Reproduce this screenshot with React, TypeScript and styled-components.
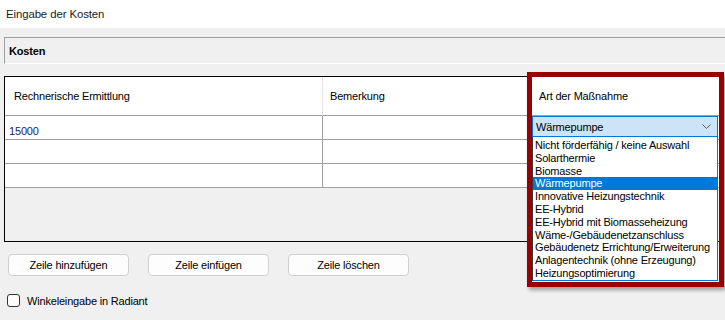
import styled, { createGlobalStyle } from 'styled-components';

const GlobalStyle = createGlobalStyle`
  html, body {
    margin: 0;
    padding: 0;
    background: #f0f0f0;
  }
  body {
    font-family: "Liberation Sans", Arial, sans-serif;
    font-size: 11px;
    letter-spacing: -0.18px;
    color: #000;
  }
`;

const OPTIONS = [
    'Nicht förderfähig / keine Auswahl',
    'Solarthermie',
    'Biomasse',
    'Wärmepumpe',
    'Innovative Heizungstechnik',
    'EE-Hybrid',
    'EE-Hybrid mit Biomasseheizung',
    'Wäme-/Gebäudenetzanschluss',
    'Gebäudenetz Errichtung/Erweiterung',
    'Anlagentechnik (ohne Erzeugung)',
    'Heizungsoptimierung',
];

const SELECTED = 'Wärmepumpe';

export default function App() {
    return (
        <>
            <GlobalStyle />
            <Window>
                <TitleBar>Eingabe der Kosten</TitleBar>
                <Content>
                    <SectionHeader>Kosten</SectionHeader>
                    <Grid>
                        <Table>
                            <Cell $header>Rechnerische Ermittlung</Cell>
                            <Cell $header $col={2}>Bemerkung</Cell>
                            <Cell $header $col={3}>Art der Maßnahme</Cell>

                            <Cell $value>15000</Cell>
                            <Cell $col={2} />
                            <Cell $col={3}>
                                <ComboBox>
                                    <span>{SELECTED}</span>
                                    <svg width="9" height="5" viewBox="0 0 9 5">
                                        <path d="M0.5 0.5 L4.5 4.5 L8.5 0.5" fill="none" stroke="#5a5a5a" strokeWidth="1" />
                                    </svg>
                                </ComboBox>
                                <DropList>
                                    {OPTIONS.map(o => (
                                        <Option key={o} $selected={o === SELECTED}>{o}</Option>
                                    ))}
                                </DropList>
                            </Cell>

                            <Cell />
                            <Cell $col={2} />
                            <Cell $col={3} />

                            <Cell />
                            <Cell $col={2} />
                            <Cell $col={3} />
                        </Table>
                        <RedFrame />
                    </Grid>

                    <ButtonRow>
                        <Button>Zeile hinzufügen</Button>
                        <Button>Zeile einfügen</Button>
                        <Button>Zeile löschen</Button>
                    </ButtonRow>

                    <CheckRow>
                        <CheckBox />
                        <span>Winkeleingabe in Radiant</span>
                    </CheckRow>
                </Content>
            </Window>
        </>
    );
}

const Window = styled.div`
    width: 725px;
    height: 320px;
    overflow: hidden;
    background: #f0f0f0;
`;

const TitleBar = styled.div`
    height: 28px;
    background: #fff;
    padding-left: 6px;
    display: flex;
    align-items: center;
    font-size: 11.4px;
    letter-spacing: -0.1px;
    color: #1a1a1a;
`;

const Content = styled.div`
    padding: 9px 0 0 4px;
    display: flex;
    flex-direction: column;
`;

const SectionHeader = styled.div`
    height: 25px;
    border-top: 1px solid #a0a0a0;
    border-left: 1px solid #a0a0a0;
    border-bottom: 1px solid #fff;
    padding-left: 4px;
    display: flex;
    align-items: center;
    font-weight: bold;
`;

const Grid = styled.div`
    position: relative;
    margin: 12px 4px 0 0;
    height: 164px;
    border: 1px solid #000;
`;

const Table = styled.div`
    display: grid;
    grid-template-columns: 318px 208px 1fr;
    grid-auto-rows: 24px;
    grid-template-rows: 39px;
`;

const Cell = styled.div<{ $header?: boolean; $col?: number; $value?: boolean }>`
    position: relative;
    background: #fff;
    border-bottom: 1px solid #a0a0a0;
    border-right: ${({ $col = 1, $header }) =>
        $col === 3 ? 'none' : $header ? '1px solid #e3e3e3' : '1px solid #a0a0a0'};
    display: flex;
    align-items: ${({ $header }) => ($header ? 'center' : 'flex-end')};
    padding-left: ${({ $header, $col = 1 }) =>
        $header ? ($col === 1 ? '9px' : $col === 2 ? '7px' : '8px') : $col === 3 ? '0' : '4px'};
    padding-bottom: ${({ $header, $col = 1 }) => ($header || $col === 3 ? '0' : '2px')};
    color: ${({ $value }) => ($value ? '#1c1c64' : '#000')};
`;

const ComboBox = styled.div`
    box-sizing: border-box;
    margin: 0 2px 2px 1px;
    align-self: flex-start;
    width: 186px;
    height: 21px;
    border: 1px solid #0078d7;
    background: #cce4f7;
    display: flex;
    align-items: center;
    justify-content: space-between;
    padding: 0 6px 0 3px;
`;

const DropList = styled.div`
    position: absolute;
    top: 21px;
    left: 1px;
    width: 186px;
    box-sizing: border-box;
    padding-top: 2px;
    background: #fff;
    border-left: 1px solid #3a3a3a;
    border-right: 1px solid #0078d7;
    border-bottom: 1px solid #0078d7;
    z-index: 2;
`;

const Option = styled.div<{ $selected?: boolean }>`
    height: 12.8px;
    line-height: 12.8px;
    padding-left: 2px;
    white-space: nowrap;
    background: ${({ $selected }) => ($selected ? '#0078d7' : 'transparent')};
    color: ${({ $selected }) => ($selected ? '#fff' : '#000')};
`;

const RedFrame = styled.div`
    position: absolute;
    left: 522px;
    top: -5px;
    width: 197px;
    height: 215px;
    box-sizing: border-box;
    border: 5px solid #990000;
    box-shadow: 2px 3px 4px rgba(0, 0, 0, 0.35);
    pointer-events: none;
    z-index: 3;
`;

const ButtonRow = styled.div`
    display: flex;
    gap: 19px;
    margin: 12px 0 0 4px;
`;

const Button = styled.button`
    width: 121px;
    height: 22px;
    box-sizing: border-box;
    border: 1px solid #d0d0d0;
    border-radius: 4px;
    background: #fdfdfd;
    font-family: inherit;
    font-size: 11px;
    letter-spacing: -0.18px;
    color: #000;
    padding: 0;
`;

const CheckRow = styled.div`
    display: flex;
    align-items: center;
    gap: 7px;
    margin: 18px 0 0 3px;
`;

const CheckBox = styled.span`
    width: 13px;
    height: 13px;
    box-sizing: border-box;
    border: 1px solid #333;
    border-radius: 3px;
    background: #fdfdfd;
`;
